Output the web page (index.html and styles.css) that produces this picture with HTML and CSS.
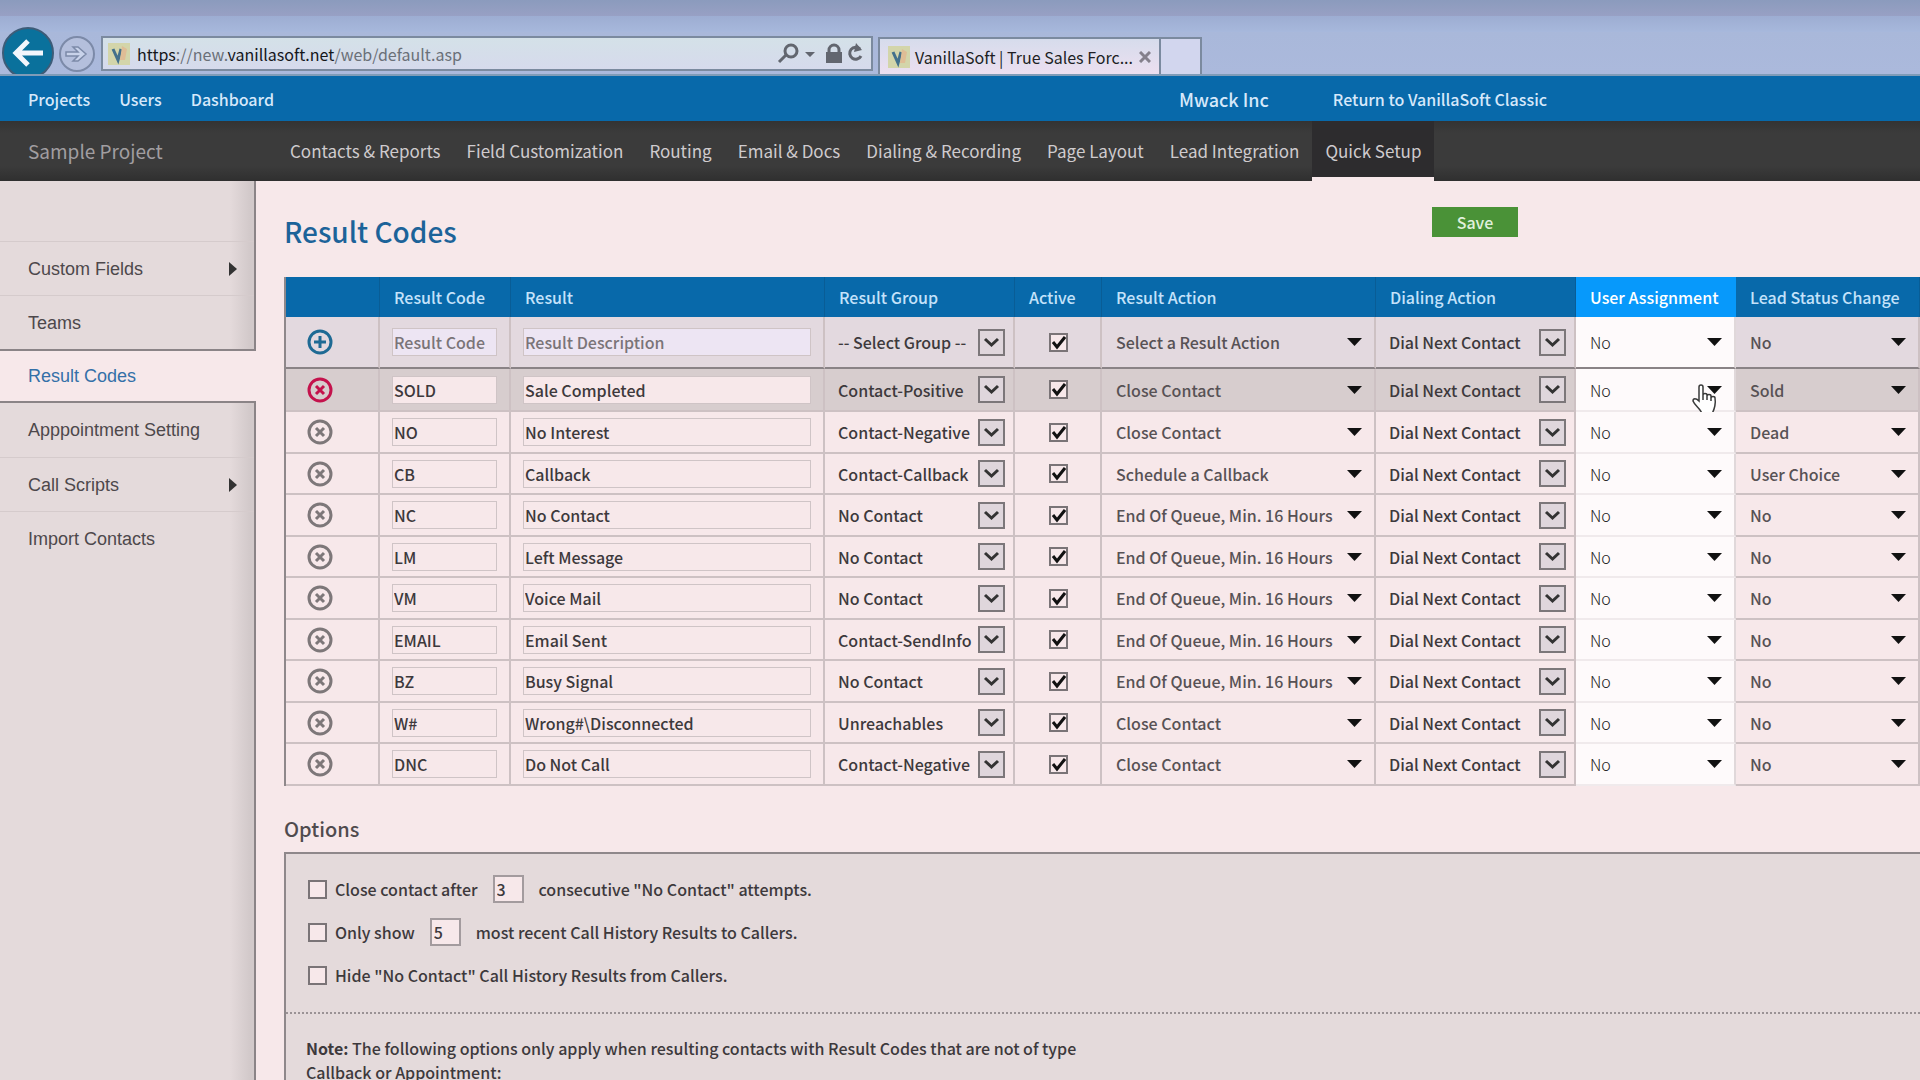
FILE: index.html
```html
<!DOCTYPE html>
<html lang="en">
<head>
<meta charset="utf-8">
<title>VanillaSoft | True Sales Force</title>
<link rel="stylesheet" href="styles.css">
</head>
<body>
<header class="browser">
  <button class="back" aria-label="Back"><svg viewBox="0 0 54 54"><circle cx="27" cy="27" r="25" fill="#0a719c" stroke="#3d5c78" stroke-width="2"/><path d="M42 27H16M27 15L15 27l12 12" fill="none" stroke="#f2f6fc" stroke-width="5"/></svg></button>
  <button class="forward" aria-label="Forward"><svg viewBox="0 0 38 38"><circle cx="19" cy="19" r="17" fill="#b4bfdc" stroke="#7c8aa8" stroke-width="2"/><path d="M8 17h12l-5-5h5l8 7-8 7h-5l5-5H8z" fill="#c9d3ea" stroke="#7c8aa8" stroke-width="1.5"/></svg></button>
  <div class="address">
    <svg class="favicon" viewBox="0 0 22 22"><rect width="22" height="22" fill="#d3d5aa"/><path d="M5 6l5 11 3-11" fill="none" stroke="#42708c" stroke-width="3"/><path d="M14 3l5 3-2 11h-5z" fill="#dfbd96"/></svg>
    <p class="url"><b>https</b>://new.<b>vanillasoft.net</b>/web/default.asp</p>
    <svg class="tools" viewBox="0 0 90 22"><g fill="none" stroke="#62666f" stroke-width="3"><circle cx="15" cy="8" r="6"/><path d="M10 12l-7 7"/><path d="M53 10V7a5 5 0 0 1 10 0v3"/><path d="M84 6a6 6 0 1 0 1 7"/></g><path d="M29 9h10l-5 5zM50 9h16v11H50zM80 0l6 7-8 2z" fill="#62666f"/></svg>
  </div>
  <div class="tab">
    <svg class="favicon" viewBox="0 0 22 22"><rect width="22" height="22" fill="#d3d5aa"/><path d="M5 6l5 11 3-11" fill="none" stroke="#42708c" stroke-width="3"/><path d="M14 3l5 3-2 11h-5z" fill="#dfbd96"/></svg>
    <span>VanillaSoft | True Sales Forc...</span>
    <button class="close" aria-label="Close tab"><svg viewBox="0 0 12 12"><path d="M1 1l10 10M11 1L1 11" stroke="#85808c" stroke-width="3"/></svg></button>
  </div>
  <button class="new-tab" aria-label="New tab"></button>
</header>
<nav class="top-nav">
  <a href="#">Projects</a><a href="#">Users</a><a href="#">Dashboard</a>
  <span class="company">Mwack Inc</span><a href="#" class="classic">Return to VanillaSoft Classic</a>
</nav>
<nav class="project-nav">
  <span class="project">Sample Project</span>
  <a href="#">Contacts &amp; Reports</a><a href="#">Field Customization</a><a href="#">Routing</a><a href="#">Email &amp; Docs</a><a href="#">Dialing &amp; Recording</a><a href="#">Page Layout</a><a href="#">Lead Integration</a><a href="#" class="current">Quick Setup</a>
</nav>
<div class="body">
  <aside class="side">
    <div class="side-group first">
      <a href="#" class="more">Custom Fields</a>
      <a href="#">Teams</a>
    </div>
    <a href="#" class="selected">Result Codes</a>
    <div class="side-group last">
      <a href="#">Apppointment Setting</a>
      <a href="#" class="more">Call Scripts</a>
      <a href="#">Import Contacts</a>
    </div>
  </aside>
  <main class="main">
    <div class="title-row"><h1>Result Codes</h1><button class="save">Save</button></div>
    <table class="codes">
      <colgroup><col class="c-icon"><col class="c-code"><col class="c-result"><col class="c-group"><col class="c-active"><col class="c-action"><col class="c-dial"><col class="c-user"><col class="c-lead"></colgroup>
      <thead><tr><th></th><th>Result Code</th><th>Result</th><th>Result Group</th><th>Active</th><th>Result Action</th><th>Dialing Action</th><th class="user">User Assignment</th><th>Lead Status Change</th></tr></thead>
      <tbody id="rows"></tbody>
    </table>
    <h2>Options</h2>
    <section class="options">
      <div class="limits">
        <div class="option"><input type="checkbox" id="close"><label for="close">Close contact after</label><input class="number" value="3" aria-label="Attempts"><span>consecutive "No Contact" attempts.</span></div>
        <div class="option"><input type="checkbox" id="show"><label for="show">Only show</label><input class="number" value="5" aria-label="Results shown"><span>most recent Call History Results to Callers.</span></div>
        <div class="option"><input type="checkbox" id="hide"><label for="hide">Hide "No Contact" Call History Results from Callers.</label></div>
      </div>
      <p class="note"><b>Note:</b> The following options only apply when resulting contacts with Result Codes that are not of type Callback or Appointment:</p>
    </section>
  </main>
</div>
<script src="rows.js"></script>
</body>
</html>
```
FILE: rows.js
```js
const queue = "End Of Queue, Min. 16 Hours";
const rows = [
  ["", "", "-- Select Group --", "Select a Result Action", "No"],
  ["SOLD", "Sale Completed", "Contact-Positive", "Close Contact", "Sold"],
  ["NO", "No Interest", "Contact-Negative", "Close Contact", "Dead"],
  ["CB", "Callback", "Contact-Callback", "Schedule a Callback", "User Choice"],
  ["NC", "No Contact", "No Contact", queue, "No"],
  ["LM", "Left Message", "No Contact", queue, "No"],
  ["VM", "Voice Mail", "No Contact", queue, "No"],
  ["EMAIL", "Email Sent", "Contact-SendInfo", queue, "No"],
  ["BZ", "Busy Signal", "No Contact", queue, "No"],
  ["W#", "Wrong#\\Disconnected", "Unreachables", "Close Contact", "No"],
  ["DNC", "Do Not Call", "Contact-Negative", "Close Contact", "No"]
];

const plus = "M14 8v12M8 14h12";
const cross = "M10 10l8 8M18 10l-8 8";
const icon = (add) => `<button class="row-icon" aria-label="${add ? "Add" : "Delete"}">
  <svg viewBox="0 0 28 28" fill="none" stroke="currentColor" stroke-width="3"><circle cx="14" cy="14" r="11"/><path d="${add ? plus : cross}"/></svg></button>`;
const select = (kind, name, text) => `<select class="${kind}" aria-label="${name}"><option>${text}</option></select>`;
const hand = `<svg class="hand" viewBox="0 0 26 32"><path d="M7 17V3a2 2 0 0 1 4 0v8c0-2 4-2 4 0v1c0-2 4-2 4 0v2c0-2 4-2 4 0 1 6 0 10-3 16H10C9 25 3 22 1 17c0-3 3-3 6 0zM11 11v5M15 12v4M19 14v3" fill="#fff" stroke="#3a3a3a" stroke-width="1.5"/></svg>`;

document.getElementById("rows").innerHTML = rows.map(([code, result, group, action, lead], i) => `
  <tr class="${["new", "hovered"][i] || ""}">
    <td class="icon-cell">${icon(i === 0)}</td>
    <td><input class="field" aria-label="Result code" placeholder="Result Code" value="${code}"></td>
    <td><input class="field" aria-label="Result" placeholder="Result Description" value="${result}"></td>
    <td>${select("boxed", "Result group", group)}</td>
    <td class="check-cell"><input type="checkbox" aria-label="Active" checked></td>
    <td>${select("plain", "Result action", action)}</td>
    <td>${select("boxed", "Dialing action", "Dial Next Contact")}</td>
    <td class="user">${select("plain", "User assignment", "No")}${i === 1 ? hand : ""}</td>
    <td>${select("plain", "Lead status change", lead)}</td>
  </tr>`).join("");
```
FILE: styles.css
```css
* { box-sizing: border-box; }
body { margin: 0; height: 100vh; overflow: hidden; display: flex; flex-direction: column; background: #f7e8ea; color: #3d393c; font: 500 16px/24px "Noto Sans CJK SC", "Noto Sans", sans-serif; }
button { padding: 0; border: 0; background: none; font: inherit; color: inherit; }
input, select { font: inherit; color: inherit; margin: 0; border-radius: 0; }
a { color: inherit; text-decoration: none; white-space: nowrap; }
svg { display: block; }
h1, h2, p { margin: 0; font-weight: 500; }

.browser { flex: none; height: 76px; display: flex; align-items: flex-end; padding-left: 1px; background: linear-gradient(#8b9bbd, #98a0c4 16px, #9dadd2 16px, #a7b8dc 32px, #a9b8da 32px, #abb9dc); border-bottom: 2px solid #7f9cb8; }
.back { width: 54px; height: 48px; overflow: hidden; }
.back svg { width: 54px; }
.forward { width: 38px; height: 38px; margin: 0 5px 1px 3px; }
.address { width: 772px; height: 35px; margin: 0 5px 3px 0; display: flex; align-items: center; padding: 0 5px; border: 2px solid #7b8a9f; background: linear-gradient(#d4e1e8, #d6daec); gap: 7px; }
.favicon { width: 22px; height: 22px; flex: none; }
.url { flex: 1; color: #6a7078; font-weight: 400; }
.url b { font-weight: 400; color: #14161a; }
.tools { width: 90px; height: 22px; }
.tab { width: 283px; height: 37px; display: flex; align-items: center; gap: 5px; padding: 0 8px; border: 2px solid #7b8a9f; border-bottom: 0; background: linear-gradient(#d6dcec, #ecdff0); color: #201e24; font-weight: 400; white-space: nowrap; }
.tab span { flex: 1; }
.close svg { width: 12px; height: 12px; }
.new-tab { width: 41px; height: 37px; border: 2px solid #7b8a9f; border-left: 0; border-bottom: 0; background: #d2d6ee; }

.top-nav { flex: none; height: 45px; display: flex; align-items: center; gap: 29px; padding-left: 28px; background: #0869aa; color: #d6e8fa; }
.company { margin-left: 876px; font-size: 18px; }
.classic { margin-left: 35px; }
.project-nav { flex: none; height: 60px; display: flex; align-items: center; padding-left: 28px; background: linear-gradient(#333, #3b3b3b 12px, #3b3b3b 45px, #2f2f2f); color: #cfcbce; font-size: 17px; font-weight: 400; }
.project { width: 249px; font-size: 19px; color: #a19ea1; }
.project-nav a { height: 60px; padding: 0 13px; line-height: 59px; }
.project-nav .current { background: #2d2c2e; border-bottom: 4px solid #f7e8ea; }

.body { flex: 1; display: flex; min-height: 0; }
.side { width: 256px; flex: none; display: flex; flex-direction: column; font: 18px/24px "Liberation Sans", sans-serif; color: #4d484b; }
.side a { display: flex; align-items: center; justify-content: space-between; height: 54px; padding: 0 17px 0 28px; }
.side-group { border-right: 2px solid #8b8487; background: linear-gradient(90deg, #e4dadb 230px, #d2c9ca 250px); }
.side-group a + a { border-top: 1px solid #d5cbcc; }
.first { padding-top: 60px; border-bottom: 2px solid #8b8487; }
.first a:first-child { border-top: 1px solid #d5cbcc; }
.side .selected { color: #3470a8; height: 50px; }
.last { flex: 1; border-top: 2px solid #8b8487; }
.more::after { content: ""; border-left: 8px solid #333; border-top: 7px solid transparent; border-bottom: 7px solid transparent; }

.main { flex: 1; min-width: 0; display: flex; flex-direction: column; padding: 26px 0 0 28px; }
.title-row { flex: none; display: flex; height: 70px; align-items: flex-start; }
h1 { width: 1148px; font-size: 28px; line-height: 48px; color: #1c6399; }
.save { width: 86px; height: 30px; background: #4a9237; color: #e0f0dc; }

.codes { width: 1636px; flex: none; table-layout: fixed; border-collapse: separate; border-spacing: 0; border-left: 2px solid #8f888b; }
.c-icon { width: 94px; } .c-code { width: 131px; } .c-result { width: 314px; } .c-group { width: 190px; }
.c-active { width: 87px; } .c-action { width: 274px; } .c-dial { width: 200px; } .c-user { width: 160px; } .c-lead { width: 184px; }
th { height: 40px; padding: 0 0 0 14px; text-align: left; font-weight: 500; background: #0869aa; color: #c4e2fa; border-right: 1px solid #095d96; white-space: nowrap; }
th.user { background: #0799fb; color: #fff; border-color: #0799fb; }
td { height: 41px; padding: 0 12px; border-right: 2px solid #cdc1c3; border-bottom: 2px solid #cdc1c3; }
tr:nth-child(odd) td { height: 42px; }
tr.new td { height: 52px; background: #e3d9df; border-bottom-color: #8a8386; }
tr.hovered td { height: 43px; background: #d7cdce; }
tr td.user { position: relative; background: #fefafb; border-right-color: #e0d8da; border-bottom-color: #f0eaec; color: #222; font-weight: 300; }
tr.new td.user { border-bottom-color: #8a8386; }
.icon-cell { padding-left: 20px; }
.row-icon { display: block; width: 28px; height: 28px; color: #7d7779; }
.new .row-icon { color: #1e6a94; }
.hovered .row-icon { color: #c4124c; }
.row-icon svg { width: 28px; height: 28px; }
.field { display: block; width: 100%; height: 28px; padding: 0 1px; border: 1px solid #cfc4c6; background: #f7e8ea; }
.new .field { background: #ede5f3; }
.field::placeholder { color: #7a7478; opacity: 1; }
select { display: block; appearance: none; width: 100%; height: 28px; border: 0; padding: 0 0 0 2px; background: no-repeat right center; }
select.boxed { padding-left: 1px; background-image: url("data:image/svg+xml,%3Csvg xmlns='http://www.w3.org/2000/svg' width='27' height='27'%3E%3Cpath d='M1 1h25v25H1z' fill='%23dfd6dc' stroke='%237c777a' stroke-width='2'/%3E%3Cpath d='M7 10l6.500 6L20 10' fill='none' stroke='%23333' stroke-width='3'/%3E%3C/svg%3E"); }
select.plain { background-image: url("data:image/svg+xml,%3Csvg xmlns='http://www.w3.org/2000/svg' width='15' height='8'%3E%3Cpath d='M0 0h15L7.500 8z' fill='%23111'/%3E%3C/svg%3E"); color: #575255; }
.user select.plain { color: inherit; }
td:has(.boxed) { padding-right: 8px; }
.check-cell { padding-left: 34px; }
input[type=checkbox] { display: block; flex: none; appearance: none; width: 19px; height: 19px; border: 2px solid #7a7477; background: #f7e8ea center no-repeat; }
input[type=checkbox]:checked { background-image: url("data:image/svg+xml,%3Csvg xmlns='http://www.w3.org/2000/svg' width='15' height='15'%3E%3Cpath d='M2 7l4 5 8-10' fill='none' stroke='%23111' stroke-width='3'/%3E%3C/svg%3E"); }
.hand { position: absolute; right: 16px; top: 15px; width: 26px; height: 32px; }

h2 { margin: 28px 0 9px; font-size: 20px; line-height: 29px; color: #504b4e; }
.options { flex: 1; border: 2px solid #8f888b; border-width: 2px 0 0 2px; background: #e4dadb; }
.limits { display: flex; flex-direction: column; gap: 15px; padding: 21px 0 23px 22px; border-bottom: 2px dotted #9a9295; }
.option { display: flex; align-items: center; height: 28px; }
.option label { margin-left: 8px; }
.number { width: 31px; height: 28px; margin: 0 15px; padding: 0 2px; border: 2px solid #a39b9e; background: #f7e8ea; }
.note { width: 820px; padding: 22px 0 0 20px; }
```
